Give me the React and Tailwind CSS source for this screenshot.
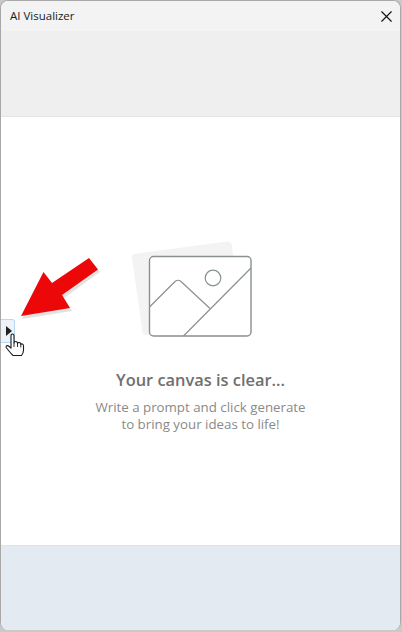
import React from "react";
import { X } from "lucide-react";

function Illustration() {
  return (
    <svg width="140" height="98" viewBox="131 240 140 98" fill="none" className="block">
      <path d="M134 254 L227 241.5 Q231 241 231.8 245 L233 256 L149 256 L149 335 L145 335 Q143 335 142.6 333 L132 258 Q131.5 254.5 134 254 Z" fill="#f3f3f3" />
      <rect x="149.5" y="256.5" width="101.5" height="79.5" rx="4" stroke="#8b9092" strokeWidth="1.4" fill="#ffffff" />
      <circle cx="213" cy="278" r="7.8" stroke="#8b9092" strokeWidth="1.2" />
      <path d="M149.5 307 L175 281.5 Q178 279 181 281.5 L210 308.5" stroke="#8b9092" strokeWidth="1.2" />
      <path d="M251 268 L183.5 336" stroke="#8b9092" strokeWidth="1.2" />
    </svg>
  );
}

function RedArrow() {
  return (
    <svg width="110" height="70" viewBox="0 255 110 70" className="absolute left-0 top-[255px]">
      <path d="M21 317 L44 273 L53 284 L90 259 L99 270 L63 296 L71 309 Z" fill="#a0a0a0" opacity="0.3" transform="translate(1 2)" />
      <path d="M21 316 L43.5 272 L52 283 L89 258 L98 269.5 L62 295 L70 308 Z" fill="#ec0808" />
    </svg>
  );
}

function HandCursor() {
  return (
    <svg width="20" height="24" viewBox="0 0 20 24" className="absolute left-[5px] top-[333px]">
      <path
        d="M6 2.5 Q6 1 7.5 1 Q9 1 9 2.5 V10 Q9.5 8.3 11 8.5 Q12.5 8.7 12.5 10.5 Q13 9.2 14.5 9.5 Q15.8 9.8 15.8 11.5 Q16.5 10.5 17.5 11 Q18.5 11.5 18.5 13 V17 Q18.5 20 16.5 22.5 H8 Q6 20.5 4 18 L1.5 15 Q0.5 13.5 1.8 12.8 Q3 12.3 4.2 13.5 L6 15.2 Z"
        fill="#ffffff"
        stroke="#1a1a1a"
        strokeWidth="1.1"
        strokeLinejoin="round"
      />
      <path d="M9 10 V14 M12.5 10.5 V14 M15.8 11.5 V14.5" stroke="#1a1a1a" strokeWidth="0.9" />
    </svg>
  );
}

export default function App() {
  return (
    <div className="relative h-[632px] w-[402px] overflow-hidden bg-[#c9c9c9] font-['Open_Sans','Noto_Sans',sans-serif]">
      <div className="flex h-[630px] w-[401px] flex-col overflow-hidden rounded-[8px] border-l border-r border-t border-[#a8a8a8] bg-white">
        <div className="flex h-[30px] shrink-0 items-center justify-between bg-[#f3f3f3] pl-[9px] pr-[4px]">
          <span className="text-[11.5px] leading-none text-[#1b1b1b]">AI Visualizer</span>
          <X size={19} strokeWidth={1.45} color="#111111" />
        </div>
        <div className="h-[86px] shrink-0 border-b border-[#e5e5e5] bg-[#efefef]" />
        <div className="flex flex-1 flex-col items-center bg-white pt-[123px]">
          <Illustration />
          <h1 className="mt-[30px] text-[16.4px] font-semibold leading-[24px] text-[#6f6f6f]">Your canvas is clear...</h1>
          <p className="mt-[7px] text-center text-[13.3px] leading-[17px] text-[#8a8a8a]">
            Write a prompt and click generate
            <br />
            to bring your ideas to life!
          </p>
        </div>
        <div className="h-[85px] shrink-0 border-t border-[#e3e3e3] bg-[#e4eaf1]" />
      </div>
      <RedArrow />
      <div className="absolute left-[1px] top-[319px] flex h-[24px] w-[14px] items-center rounded-r-[3px] border border-l-0 border-[#b5d8f5] bg-[#eef3f9] pl-[5px]">
        <div className="h-0 w-0 border-y-[5px] border-l-[6px] border-y-transparent border-l-[#222222]" />
      </div>
      <HandCursor />
    </div>
  );
}
